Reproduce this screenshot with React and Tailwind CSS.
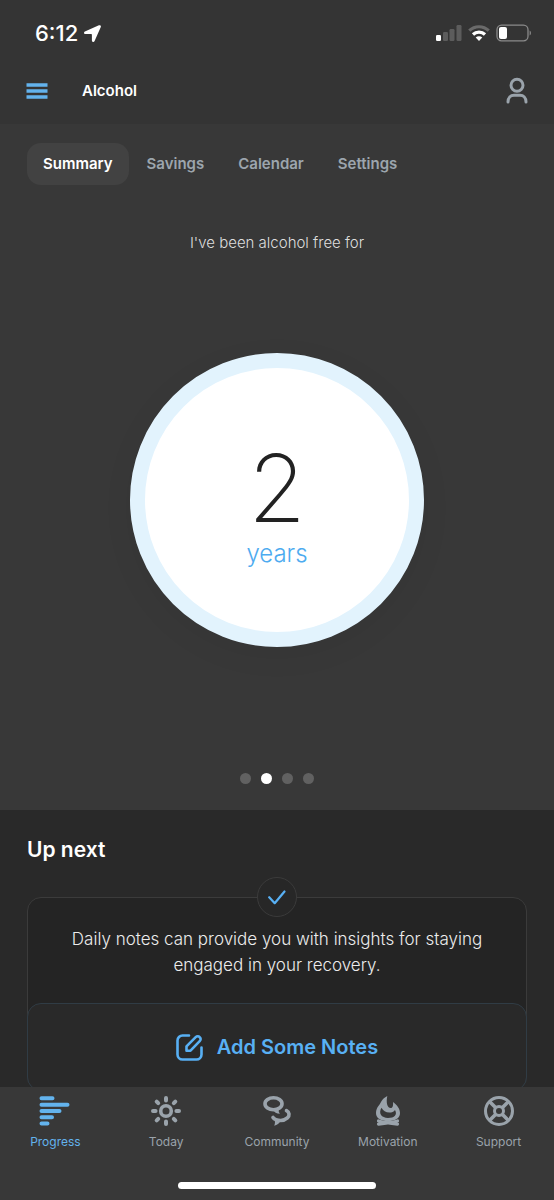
import { useState } from 'react';

const tabs = ['Summary', 'Savings', 'Calendar', 'Settings'];
const slides = [
  { value: '745', unit: 'days' },
  { value: '2', unit: 'years' },
  { value: '24', unit: 'months' },
  { value: '106', unit: 'weeks' },
];

const ProgressIcon = () => (
  <svg width="32" height="30" viewBox="0 0 32 30" stroke="currentColor" strokeWidth="4" strokeLinecap="round" aria-hidden="true">
    <path d="M2.500 2.300h11M2.500 8.700h26M2.500 15h18M2.500 21.200H13M2.500 27.500h6" />
  </svg>
);

const TodayIcon = () => (
  <svg width="30" height="30" viewBox="0 0 30 30" fill="none" stroke="currentColor" strokeWidth="4" strokeLinecap="round" aria-hidden="true">
    <circle cx="15" cy="15" r="5.3" strokeWidth="3.6" />
    <path d="M15 2v2.6M15 25.4V28M2 15h2.6M25.4 15H28M5.7 5.7l1.5 1.5M22.8 22.8l1.5 1.5M24.3 5.7l-1.5 1.5M7.2 22.8l-1.5 1.5" />
  </svg>
);

const CommunityIcon = () => (
  <svg width="30" height="30" viewBox="0 0 30 30" fill="none" stroke="currentColor" strokeWidth="3.6" strokeLinecap="round" aria-hidden="true">
    <ellipse cx="11.5" cy="7.8" rx="8.5" ry="6" />
    <path d="M10.5 13h6.5c-.6 1.600-.3 3.200.9 4.800-3.200-.1-5.600-1.200-7.400-4.800z" fill="currentColor" stroke="none" />
    <path d="M24.500 14.600c3 1.500 3.400 5 .9 7.300-2.800 2.500-7.600 3-11.400 1.700-1.400-.5-2.400-1.200-3-2.100" />
    <path d="M12 22.500l6.500 2.500c-1.300 2.600-3.300 4-6.300 4.800 1.100-2.200 1.100-4.500-.2-7.300z" fill="currentColor" stroke="none" />
  </svg>
);

const MotivationIcon = () => (
  <svg width="26" height="30" viewBox="0 0 26 30" fill="none" stroke="currentColor" aria-hidden="true">
    <path
      d="M12.300 0C6.500 3 6.200 6.500 3.800 9.600 1.800 12.200 1 14.200 1 17c0 5.500 5 8 12 8s12-2.500 12-8c0-4.200-2.700-7.700-7-11 .3 3.600-.2 6-2.200 6-3.800 0-4.800-6-3.500-12zM6.500 11.800c1.600 3.200 4.300 4.700 7.900 4.700 2.400 0 4.300-.8 5.600-2.600 2.700 4.700-.5 8-7 8s-9.900-4.300-6.500-10.100z"
      fill="currentColor"
      fillRule="evenodd"
      stroke="none"
    />
    <path d="M3.500 28.200c7-.7 13-1.500 19-3.200M3.500 25c6 1.700 12 2.500 19 3.200" strokeWidth="3.200" strokeLinecap="round" />
  </svg>
);

const SupportIcon = () => (
  <svg width="30" height="30" viewBox="0 0 30 30" fill="none" stroke="currentColor" strokeWidth="3" aria-hidden="true">
    <circle cx="15" cy="15" r="13.500" />
    <circle cx="15" cy="15" r="4.500" />
    <path d="M5.500 5.500l6.500 6.500M24.500 5.500l-6.500 6.500M5.500 24.500l6.500-6.500M24.500 24.500l-6.500-6.500" strokeWidth="3.600" />
  </svg>
);

const navItems = [
  { label: 'Progress', Icon: ProgressIcon },
  { label: 'Today', Icon: TodayIcon },
  { label: 'Community', Icon: CommunityIcon },
  { label: 'Motivation', Icon: MotivationIcon },
  { label: 'Support', Icon: SupportIcon },
];

const StatusBar = () => (
  <div className="flex items-center justify-between pl-[35px] pr-[22px] pt-[19px]">
    <div className="flex items-center gap-1.5 text-[22px] leading-7 font-medium">
      <span>6:12</span>
      <svg width="17" height="17" viewBox="0 0 17 17" fill="currentColor" aria-hidden="true">
        <path d="M14.900.3.900 6.400C-.5 7.100-.1 9 1.300 9h5.900c.5 0 .7.2.7.700v5.800c0 1.600 2 2.100 2.700.500L16.800 2c.5-1.200-.7-2.200-1.900-1.700z" />
      </svg>
    </div>
    <div className="flex items-center gap-1.5">
      <svg width="26" height="16" viewBox="0 0 26 16" fill="currentColor" aria-hidden="true">
        <rect x="0" y="10" width="5" height="6" rx="1.200" />
        <g className="text-[#5c5c5c]">
          <rect x="7" y="7" width="5" height="9" rx="1.200" />
          <rect x="13.500" y="4" width="5" height="12" rx="1.200" />
          <rect x="20.500" y="0" width="5" height="16" rx="1.200" />
        </g>
      </svg>
      <svg width="22" height="16" viewBox="0 0 22 16" fill="none" strokeWidth="3.200" aria-hidden="true">
        <path d="M1.300 5.700C6.700.4 15.300.4 20.700 5.700" stroke="#6a6a6a" />
        <path d="M5 9.500c3.300-3.200 8.700-3.200 12 0" stroke="currentColor" />
        <path d="M11 16l-3.300-3.400c1.800-1.700 4.800-1.700 6.600 0z" fill="currentColor" />
      </svg>
      <svg width="36" height="18" viewBox="0 0 36 18" aria-hidden="true">
        <rect x="1" y="1.200" width="31" height="15.600" rx="4.500" fill="none" stroke="#8a8a8a" strokeWidth="1.300" />
        <rect x="3" y="3" width="8" height="12" rx="2" fill="currentColor" />
        <path d="M33.600 6.500c1.800.8 1.800 4.200 0 5z" fill="#8a8a8a" />
      </svg>
    </div>
  </div>
);

const App = () => {
  const [activeTab, setActiveTab] = useState('Summary');
  const [slide, setSlide] = useState(1);
  const [activeNav, setActiveNav] = useState('Progress');

  return (
    <div className="h-screen flex flex-col bg-[#292929] text-white font-['Inter',sans-serif]">
      <header className="bg-[#343434]">
        <StatusBar />
        <div className="flex items-center px-[26px] pt-[30px] pb-5">
          <button aria-label="Menu" className="mr-[34px] text-[#63b3ed]">
            <svg className="block" width="22" height="16" viewBox="0 0 22 16" stroke="currentColor" strokeWidth="3.600" aria-hidden="true">
              <path d="M.5 2h21M.5 8h21M.5 14h21" />
            </svg>
          </button>
          <h1 className="flex-1 text-[15px] leading-5 font-semibold">Alcohol</h1>
          <button aria-label="Account" className="text-[#9aa3ab]">
            <svg className="block" width="22" height="27" viewBox="0 0 22 27" fill="none" stroke="currentColor" strokeWidth="3" strokeLinecap="round" aria-hidden="true">
              <circle cx="11" cy="8.200" r="6" />
              <path d="M2 25c0-4.500 2.600-6.800 6-6.800h6c3.400 0 6 2.300 6 6.800" />
            </svg>
          </button>
        </div>
      </header>

      <main className="flex-1 min-h-0 overflow-y-auto [scrollbar-width:none]">
        <section className="bg-[#383838] pt-[19px] pb-[26px]">
          <div role="tablist" className="flex gap-0.5 px-[27px]">
            {tabs.map((tab) => (
              <button
                key={tab}
                role="tab"
                aria-selected={activeTab === tab}
                onClick={() => setActiveTab(tab)}
                className={`rounded-[14px] px-4 py-[11px] text-[15px] leading-5 font-semibold ${
                  activeTab === tab ? 'bg-[#424242] text-white' : 'text-[#9ca5ad]'
                }`}
              >
                {tab}
              </button>
            ))}
          </div>

          <p className="mt-12 text-center text-[15px] leading-5 font-light text-[#dedede]">I've been alcohol free for</p>

          {/* Counter */}
          <div className="mx-auto mt-[100px] flex size-[294px] flex-col items-center justify-center rounded-full border-[15px] border-[#e2f3fd] bg-white pt-2 shadow-[0_8px_32px_rgba(0,0,0,0.05)]">
            <span className="text-[94px] leading-[100px] font-extralight text-[#222]">{slides[slide].value}</span>
            <span className="text-2xl leading-8 font-light text-[#4dabf0]">{slides[slide].unit}</span>
          </div>

          <div className="mt-[126px] flex justify-center gap-2.5">
            {slides.map(({ unit }, i) => (
              <button
                key={unit}
                aria-label={`Show ${unit}`}
                onClick={() => setSlide(i)}
                className={`size-[11px] rounded-full ${i === slide ? 'bg-white' : 'bg-[#616161]'}`}
              />
            ))}
          </div>
        </section>

        <section className="px-[27px] pt-6 pb-8">
          <h2 className="text-[21px] leading-8 font-semibold">Up next</h2>
          <div className="relative mt-[31px] rounded-[14px] border border-[#3b3b3b] bg-[#242424]">
            <div className="absolute -top-[21px] left-1/2 flex size-10 -translate-x-1/2 items-center justify-center rounded-full border border-[#3b3b3b] bg-[#272727] text-[#58b0f4]">
              <svg width="18" height="15" viewBox="0 0 18 15" fill="none" stroke="currentColor" strokeWidth="2.200" strokeLinecap="round" strokeLinejoin="round" aria-hidden="true">
                <path d="M1.200 7.200l5.500 6L16.500 1.500" />
              </svg>
            </div>
            <p className="px-8 pt-7 pb-[25px] text-center text-[17px] leading-[26px] font-light text-[#ececec]">
              Daily notes can provide you with insights for staying engaged in your recovery.
            </p>
            <div className="-mx-px -mb-px">
              <button className="flex w-full items-center justify-center gap-3.5 rounded-[14px] border border-[#303c45] bg-[#292929] py-7 text-xl leading-[30px] font-semibold text-[#58b0f4]">
                <svg width="27" height="27" viewBox="0 0 27 27" fill="none" stroke="currentColor" strokeWidth="2.600" strokeLinecap="round" strokeLinejoin="round" aria-hidden="true">
                  <path d="M13 1.500H6.500a5 5 0 0 0-5 5v14a5 5 0 0 0 5 5h14a5 5 0 0 0 5-5V13.500" />
                  <path d="M10.500 16.700v-4.300l9.200-9.200c1.300-1.300 2.900-1.200 4 0 1.200 1.100 1.300 2.700 0 4l-9.200 9.500z" />
                </svg>
                Add Some Notes
              </button>
            </div>
          </div>
        </section>
      </main>

      <nav className="bg-[#383838] pt-[9px] pb-[11px]">
        <div className="grid grid-cols-5">
          {navItems.map(({ label, Icon }) => (
            <button
              key={label}
              onClick={() => setActiveNav(label)}
              className={`flex flex-col items-center gap-[7px] text-xs leading-[18px] ${
                activeNav === label ? 'text-[#63b3ed]' : 'text-[#9aa3ab]'
              }`}
            >
              <Icon />
              {label}
            </button>
          ))}
        </div>
        <div className="mx-auto mt-[31px] h-[7px] w-[198px] rounded-full bg-white" />
      </nav>
    </div>
  );
};

export default App;
